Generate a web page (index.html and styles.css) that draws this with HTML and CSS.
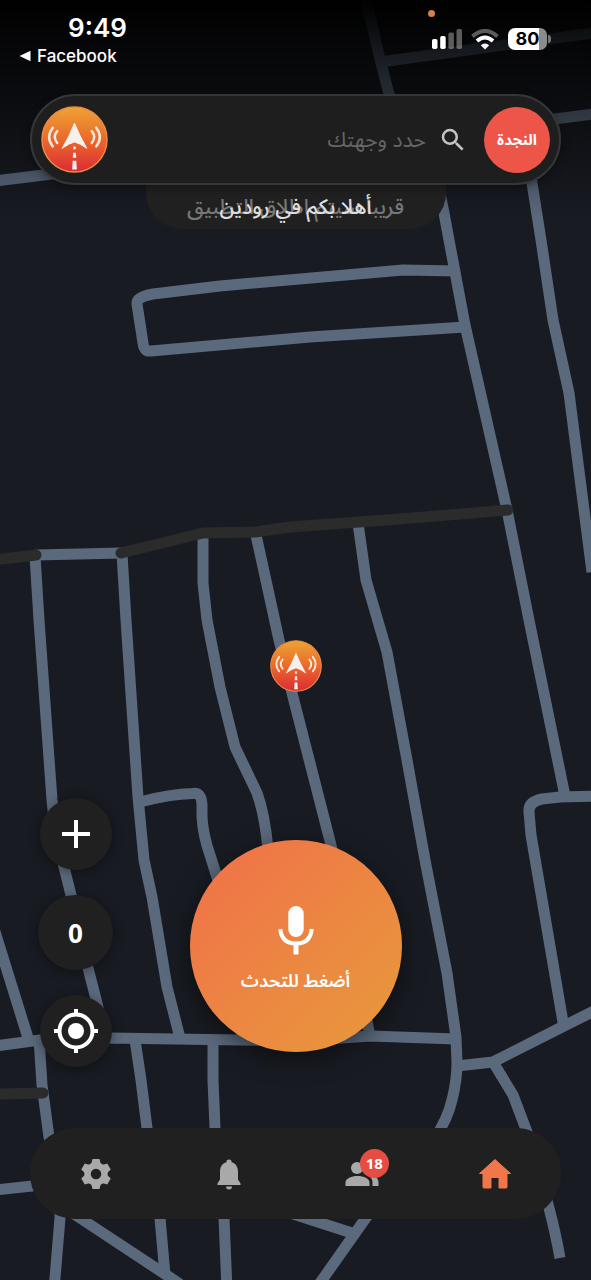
FILE: index.html
```html
<!DOCTYPE html>
<html lang="ar">
<head>
  <meta charset="UTF-8">
  <meta name="viewport" content="width=device-width, initial-scale=1">
  <title>رودين</title>
  <link rel="stylesheet" href="styles.css">
</head>
<body>

<!-- logo, used in the search bar and on the map -->
<svg width="0" height="0" class="defs" aria-hidden="true">
  <defs>
    <linearGradient id="logoFill" x1="0" y1="0" x2="0" y2="1">
      <stop offset="0" stop-color="#eda336"/>
      <stop offset="0.5" stop-color="#ea6a2a"/>
      <stop offset="1" stop-color="#dc2a36"/>
    </linearGradient>
    <symbol id="logo" viewBox="0 0 68 68">
      <circle cx="34" cy="34" r="33" fill="url(#logoFill)" stroke="#ee8a45" stroke-width="1.5"/>
      <path d="M34 17.500Q39 30 46.500 43 40 38 34 36.500 28 38 21.500 43 29 30 34 17.500Z" fill="#f7f1ee" stroke="#f7f1ee" stroke-width="1" stroke-linejoin="round"/>
      <g fill="none" stroke="#f7e6dc" stroke-width="2.5" stroke-linecap="round">
        <path d="M12 22q-7.500 9.500 0 19M16.500 25.500q-5 6 0 12"/>
        <path d="M56 22q7.500 9.500 0 19M51.500 25.500q5 6 0 12"/>
      </g>
      <path d="M33 41h2l.3 3h-2.600zM32.700 47.500h2.600l.5 5h-3.600zM32.200 55.500h3.600l.6 9h-4.800z" fill="#fbeff0"/>
    </symbol>
  </defs>
</svg>

<main class="screen">

  <!-- map -->
  <div class="map">
    <svg class="roads" viewBox="0 0 591 1280" preserveAspectRatio="xMidYMid slice" aria-hidden="true">
      <g class="road">
        <path d="M365-6 368 8 379 55 389 94 436 175 444 213 449 240 465 325 507 510 530 625 565 796"/>
        <path d="M380 62 600 32"/>
        <path d="M524 123 600 113M525 130 532 183 541 240 553 320 569 393 592 572"/>
        <path d="M-5 181 60 173"/>
        <path d="M457 271 403 270 220 286 153 294Q136 297 137 304L143 343Q144 352 151 351L310 337 465 327"/>
        <path d="M36 555 122 553"/>
        <path d="M35 556 39 620 52 800 55 830 64 867 71 895 88 968 97 1003 105 1038"/>
        <path d="M122 554 126 620 138 797 144 860 152 897 167 987 180 1038"/>
        <path d="M140 802Q170 794 193 793.500 202 792 202 806L202 817Q203 835 210 855L221 890"/>
        <path d="M203 535V583L207 620 220 687 235 747 257 793Q265 815 268 850"/>
        <path d="M256 535 279 640 292 693 331 845 370 1036"/>
        <path d="M358 523 366 580 382 635 387 652 407 760 425 860 447 973 456 1037 457 1063Q457 1080 452 1100 448 1118 434 1140"/>
        <path d="M-5 1046 40 1040 110 1038 300 1041 370 1036 456 1039"/>
        <path d="M457 1066 493 1062 564 1026 600 1008"/>
        <path d="M600 796 560 797 542 799Q528 802 529 812L531 835 564 1028"/>
        <path d="M493 1062 513 1095 530 1140 549 1208Q556 1235 560 1258"/>
        <path d="M-8 922 28 1038"/>
        <path d="M39 1038 42 1085 49 1137 60 1180 60 1218 54 1290"/>
        <path d="M-5 1190 60 1183"/>
        <path d="M135 1040 141 1080 147 1128 160 1218 165 1275"/>
        <path d="M213 1040V1080L215 1128 224 1218 227 1290"/>
        <path d="M60 1205 80 1218 180 1284"/>
        <path d="M290 1213 352 1233M375 1205 315 1290"/>
      </g>
      <g class="road-dark">
        <path d="M-6 560 36 555"/>
        <path d="M121 553 203 533 255 532 290 527 400 519 508 510"/>
        <path d="M-6 1094 43 1093"/>
      </g>
    </svg>
    <svg class="pin" aria-hidden="true"><use href="#logo"/></svg>
  </div>

  <!-- status bar -->
  <header class="status">
    <div class="status-left">
      <time>9:49</time>
      <a href="#">
        <svg width="12" height="12" viewBox="0 0 12 12"><path d="M11.500.8v10.400L.5 6z" fill="#fff"/></svg>
        Facebook
      </a>
    </div>
    <span class="rec-dot"></span>
    <div class="status-right">
      <svg width="30" height="20" viewBox="0 0 30 20" fill="#fff">
        <rect x="0" y="10" width="5.500" height="10" rx="1.800"/>
        <rect x="8.200" y="7" width="5.500" height="13" rx="1.800"/>
        <rect x="16.400" y="3.500" width="5.500" height="16.500" rx="1.800" opacity=".35"/>
        <rect x="24.500" y="0" width="5.500" height="20" rx="1.800" opacity=".35"/>
      </svg>
      <svg width="28" height="21" viewBox="0 0 28 21" fill="none" stroke="#fff" stroke-width="4">
        <path d="M1.500 7.500Q14-3.500 26.500 7.500" opacity=".35"/>
        <path d="M6 12Q14 5 22 12"/>
        <path d="M9.800 16.200Q14 13 18.200 16.200L14 20.500z" fill="#fff" stroke="none"/>
      </svg>
      <div class="battery"><span>80</span></div>
    </div>
  </header>

  <!-- search bar -->
  <form class="search">
    <svg class="logo" aria-hidden="true"><use href="#logo"/></svg>
    <input type="text" id="destination" dir="rtl" placeholder="حدد وجهتك">
    <label for="destination" aria-label="بحث">
      <svg width="30" height="30" viewBox="0 0 24 24" fill="#c4c4c4"><path d="M15.500 14h-.79l-.28-.27A6.470 6.470 0 0 0 16 9.500 6.500 6.500 0 1 0 9.500 16c1.610 0 3.090-.59 4.230-1.570l.27.28v.79l5 4.990L20.490 19zm-6 0A4.500 4.500 0 1 1 14 9.500 4.490 4.490 0 0 1 9.500 14z"/></svg>
    </label>
    <button type="button" class="sos">النجدة</button>
  </form>

  <!-- two lines cross-fading in the same place -->
  <div class="notice" dir="rtl">
    <span class="old">قريبا سيتم اطلاق التطبيق</span>
    <span>أهلا بكم في رودين</span>
  </div>

  <!-- map controls -->
  <section class="controls">
    <div class="side">
      <button class="round" aria-label="تكبير">
        <svg width="30" height="30" viewBox="0 0 30 30" stroke="#fff" stroke-width="4"><path d="M15 1v28M1 15h28"/></svg>
      </button>
      <button class="round speed">0</button>
      <button class="round" aria-label="موقعي">
        <svg width="46" height="46" viewBox="0 0 46 46" fill="none" stroke="#fff" stroke-width="4">
          <circle cx="23" cy="23" r="16.500"/>
          <circle cx="23" cy="23" r="8" fill="#fff" stroke="none"/>
          <path d="M23 1v7M23 38v7M1 23h7M38 23h7"/>
        </svg>
      </button>
    </div>
    <button class="talk">
      <svg width="36" height="50" viewBox="0 0 36 50" aria-hidden="true">
        <rect x="10.300" y="1" width="15.400" height="31" rx="7.700" fill="#fff"/>
        <path d="M2.300 24Q3.500 38.500 18 38.500T33.700 24" fill="none" stroke="#fff" stroke-width="4"/>
        <path d="M18 38v11.500" stroke="#fff" stroke-width="5"/>
      </svg>
      أضغط للتحدث
    </button>
  </section>

  <!-- bottom navigation -->
  <nav class="nav">
    <a href="#" aria-label="الإعدادات">
      <svg width="36" height="36" viewBox="0 0 36 36" fill="none" stroke="#a9a9a9">
        <circle cx="18" cy="18" r="8.500" stroke-width="6.500"/>
        <g fill="#a9a9a9" stroke="none">
          <path id="teeth" d="M14.500 3h7l1.500 6h-10zM14.500 33h7l1.500-6h-10z"/>
          <use href="#teeth" transform="rotate(60 18 18)"/>
          <use href="#teeth" transform="rotate(120 18 18)"/>
        </g>
      </svg>
    </a>
    <a href="#" aria-label="التنبيهات">
      <svg width="36" height="36" viewBox="0 0 36 36" fill="#a9a9a9"><path d="M18 3.500a2.500 2.500 0 0 1 2.500 2.800C25 7.500 27 11 27 16v7.500l2.500 4V29h-23v-1.500l2.500-4V16c0-5 2-8.500 6.500-9.700A2.500 2.500 0 0 1 18 3.500zM15 30.500h6a3 3 0 0 1-6 0z"/></svg>
    </a>
    <a href="#" aria-label="الأصدقاء">
      <svg width="36" height="36" viewBox="0 0 36 36" fill="#a9a9a9"><circle cx="13" cy="12" r="6"/><path d="M1.500 30v-3.500c0-4 6-6.500 12-6.500s12 2.500 12 6.500V30zM22 18c6 .5 12.500 3 12.500 8v4h-6v-4c0-3-2-5.500-6.500-8zM20 6a6 6 0 0 1 0 12q4-6 0-12z"/></svg>
      <span class="badge">18</span>
    </a>
    <a href="#" aria-label="الرئيسية">
      <svg width="36" height="36" viewBox="0 0 36 36" fill="#f0774a" stroke="#f0774a" stroke-linejoin="round"><path d="M18 3.500 33.500 17.500H30V31q0 1-1 1h-7v-10.500h-8v10.500H7Q6 32 6 31V17.500H2.500z"/></svg>
    </a>
  </nav>

</main>

</body>
</html>
```
FILE: styles.css
```css
:root {
  --map-bg: #181b22;
  --road: #5b697c;
  --panel: #202021;
  --arabic: "Noto Sans Arabic", "DejaVu Sans", sans-serif;
}

* {
  box-sizing: border-box;
}

body {
  margin: 0;
  background: var(--map-bg);
  color: #fff;
  font-family: Inter, sans-serif;
}

button {
  border: 0;
  padding: 0;
  color: #fff;
  cursor: pointer;
}

svg {
  display: block;
}

.defs {
  position: absolute;
}

.screen {
  position: relative;
  display: flex;
  flex-direction: column;
  min-height: 100vh;
  overflow: hidden;
}

/* map */
.map {
  position: absolute;
  inset: 0;
}

.map::after {
  content: "";
  position: absolute;
  inset: 0 0 auto;
  height: 220px;
  background: linear-gradient(#000, rgba(0, 0, 0, 0.75) 25%, rgba(0, 0, 0, 0));
}

.roads {
  width: 100%;
  height: 100%;
}

.road,
.road-dark {
  fill: none;
  stroke: var(--road);
  stroke-width: 11;
  stroke-linejoin: round;
}

.road-dark {
  stroke: #2b2b2b;
  stroke-linecap: round;
}

.pin {
  position: absolute;
  top: 52%;
  left: 50%;
  width: 52px;
  height: 52px;
  transform: translate(-50%, -50%);
}

/* status bar */
.status {
  position: relative;
  display: flex;
  justify-content: space-between;
  height: 94px;
  padding: 12px 40px 0 19px;
}

.status-left time {
  display: block;
  padding-left: 49px;
  font-size: 26px;
  font-weight: 600;
  line-height: 32px;
}

.status-left a {
  display: flex;
  align-items: center;
  gap: 6px;
  color: #fff;
  font-size: 17px;
  font-weight: 500;
  line-height: 24px;
  text-decoration: none;
}

.status-right {
  display: flex;
  align-items: center;
  gap: 9px;
  height: 54px;
}

.battery {
  position: relative;
  width: 39px;
  height: 22px;
  margin-right: 4px;
  border-radius: 7px;
  background: linear-gradient(90deg, #fff 80%, #8b8b8b 80%);
  color: #000;
  font-size: 18px;
  font-weight: 700;
  line-height: 22px;
  text-align: center;
}

.battery::after {
  content: "";
  position: absolute;
  top: 7px;
  right: -4px;
  width: 3px;
  height: 8px;
  border-radius: 0 3px 3px 0;
  background: #777;
}

.rec-dot {
  position: absolute;
  top: 10px;
  right: 156px;
  width: 7px;
  height: 7px;
  border-radius: 50%;
  background: #d0844a;
}

/* search bar */
.search {
  position: relative;
  z-index: 1;
  display: flex;
  align-items: center;
  height: 91px;
  margin: 0 30px;
  padding: 0 9px;
  border: 2px solid #343637;
  border-radius: 46px;
  background: #1e1e1e;
  box-shadow: 0 3px 10px rgba(0, 0, 0, 0.35);
}

.logo {
  flex: none;
  width: 67px;
  height: 67px;
}

.search input {
  flex: 1;
  min-width: 0;
  margin: 0 12px;
  padding: 0;
  border: 0;
  outline: 0;
  background: none;
  color: #fff;
  font-family: var(--arabic);
  font-size: 21px;
}

.search input::placeholder {
  color: #666;
  opacity: 1;
}

.search label {
  margin-right: 16px;
}

.sos {
  flex: none;
  width: 66px;
  height: 66px;
  border-radius: 50%;
  background: #ed5549;
  font-family: var(--arabic);
  font-size: 15px;
  font-weight: 700;
}

.notice {
  position: relative;
  display: grid;
  place-items: center;
  align-self: center;
  width: 300px;
  height: 44px;
  border-radius: 0 0 36px 36px;
  background: var(--panel);
  color: #dedede;
  font-family: var(--arabic);
  font-size: 21px;
  font-weight: 500;
  line-height: 28px;
  white-space: nowrap;
}

.notice span {
  grid-area: 1 / 1;
}

.notice .old {
  color: #777;
}

/* map controls */
.controls {
  position: relative;
  display: grid;
  grid-template-columns: 1fr auto 1fr;
  align-items: end;
  margin-top: auto;
  padding: 0 38px;
}

.side {
  display: flex;
  flex-direction: column;
  align-items: center;
  justify-self: start;
  gap: 25px;
}

.round {
  display: grid;
  place-items: center;
  width: 72px;
  height: 72px;
  border-radius: 50%;
  background: var(--panel);
  box-shadow: 0 2px 12px rgba(0, 0, 0, 0.4);
}

.speed {
  width: 75px;
  height: 75px;
  font-family: "Open Sans", sans-serif;
  font-size: 26px;
  font-weight: 700;
}

.talk {
  display: flex;
  flex-direction: column;
  align-items: center;
  justify-content: center;
  gap: 12px;
  width: 212px;
  height: 212px;
  margin-bottom: 15px;
  padding-top: 7px;
  border-radius: 50%;
  background: linear-gradient(135deg, #f07448 10%, #e8963c 90%);
  box-shadow: 0 6px 24px rgba(0, 0, 0, 0.5);
  font-family: var(--arabic);
  font-size: 18px;
  font-weight: 600;
  line-height: 28px;
}

/* bottom navigation */
.nav {
  position: relative;
  display: flex;
  align-items: center;
  height: 91px;
  margin: 61px 30px;
  border-radius: 46px;
  background: var(--panel);
}

.nav a {
  position: relative;
  flex: 1;
  display: grid;
  place-items: center;
}

.badge {
  position: absolute;
  top: -7px;
  left: calc(50% - 2px);
  width: 29px;
  height: 29px;
  border-radius: 50%;
  background: #e54d42;
  color: #fff;
  font-family: "Open Sans", sans-serif;
  font-size: 15px;
  font-weight: 700;
  line-height: 29px;
  text-align: center;
}
```
